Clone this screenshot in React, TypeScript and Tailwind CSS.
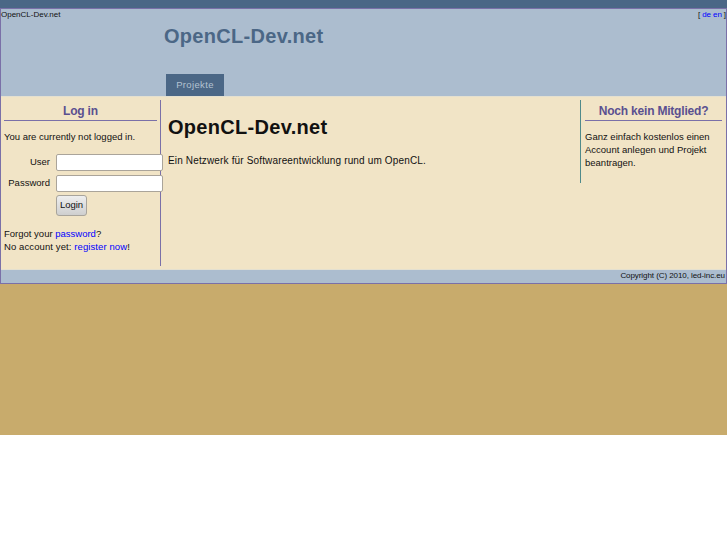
export default function App() {
  return (
    <div className="w-[727px] h-[545px] bg-white font-['Liberation_Sans',sans-serif] text-[11px] text-[#111] overflow-hidden">
      <div className="h-[435px] bg-[#c8ab6c]">
        <div className="h-[8px] bg-[#4b6786]" />
        <div className="h-[276px] border border-[#7a70a8] flex flex-col">
          <div className="h-[87px] bg-[#acbdcf] relative shrink-0">
            <div className="flex justify-between text-[8px] leading-[10px] h-[10px] mt-[1px]">
              <span>OpenCL-Dev.net</span>
              <span className="tracking-[-0.1px]">[ <a className="text-[#0000ff]">de</a> <a className="text-[#0000ff]">en</a> ]</span>
            </div>
            <div className="ml-[163px] mt-[4px] text-[20px] leading-[24px] font-bold tracking-[0.3px] text-[#4b6786]">OpenCL-Dev.net</div>
            <div className="absolute left-[165px] bottom-0 w-[58px] h-[22px] bg-[#4b6786] text-[#b4c3d2] text-[9.5px] tracking-[0.35px] flex items-center justify-center">Projekte</div>
          </div>
          <div className="flex-1 bg-[#f1e4c6] flex pt-[3px] border-t border-[#e4e0d0]">
            <div className="w-[160px] h-[166px] shrink-0 border-r border-[#7a70a8] pl-[3px] pr-[3px]">
              <div className="text-center text-[12px] font-bold text-[#5a5090] tracking-[-0.2px] border-b border-[#7a70a8] leading-[18px] h-[21px] pt-[2px]">Log in</div>
              <p className="mt-[9px] leading-[13px] text-[9.5px]">You are currently not logged in.</p>
              <div className="mt-[11px] flex items-center h-[17px]">
                <span className="w-[46px] shrink-0 text-right text-[9.5px]">User</span>
                <div className="ml-[6px] w-[107px] shrink-0 h-[17px] bg-white border border-[#aaa49a] rounded-[2px]" />
              </div>
              <div className="mt-[4px] flex items-center h-[17px]">
                <span className="w-[46px] shrink-0 text-right text-[9.5px]">Password</span>
                <div className="ml-[6px] w-[107px] shrink-0 h-[17px] bg-white border border-[#aaa49a] rounded-[2px]" />
              </div>
              <div className="mt-[3px] ml-[52px] w-[31px] h-[21px] bg-gradient-to-b from-[#eeeeee] to-[#cfcfcf] border border-[#a8a49c] rounded-[3px] text-[9.5px] flex items-center justify-center">Login</div>
              <p className="mt-[11px] leading-[13px] text-[9.5px]">
                <span className="block">Forgot your <a className="text-[#0000ff]">password</a>?</span>
                <span className="block tracking-[0.1px]">No account yet: <a className="text-[#0000ff]">register now</a>!</span>
              </p>
            </div>
            <div className="flex-1 px-[7px]">
              <h1 className="text-[20px] leading-[24px] font-bold tracking-[0.3px] mt-[15px]">OpenCL-Dev.net</h1>
              <p className="mt-[15px] text-[10px] leading-[13px] tracking-[0.15px]">Ein Netzwerk für Softwareentwicklung rund um OpenCL.</p>
            </div>
            <div className="w-[146px] h-[83px] shrink-0 border-l border-[#4f8a8b] pl-[4px] pr-[4px]">
              <div className="text-center text-[12px] font-bold text-[#5a5090] tracking-[-0.2px] border-b border-[#7a70a8] leading-[18px] h-[21px] pt-[2px]">Noch kein Mitglied?</div>
              <p className="mt-[9px] leading-[13px] text-[9.5px]">Ganz einfach kostenlos einen Account anlegen und Projekt beantragen.</p>
            </div>
          </div>
          <div className="h-[14px] shrink-0 bg-[#acbdcf] border-t border-[#e4e0d0] text-[8px] leading-[11px] text-right pr-[1px] tracking-[-0.07px]">Copyright (C) 2010, led-inc.eu</div>
        </div>
      </div>
    </div>
  );
}
